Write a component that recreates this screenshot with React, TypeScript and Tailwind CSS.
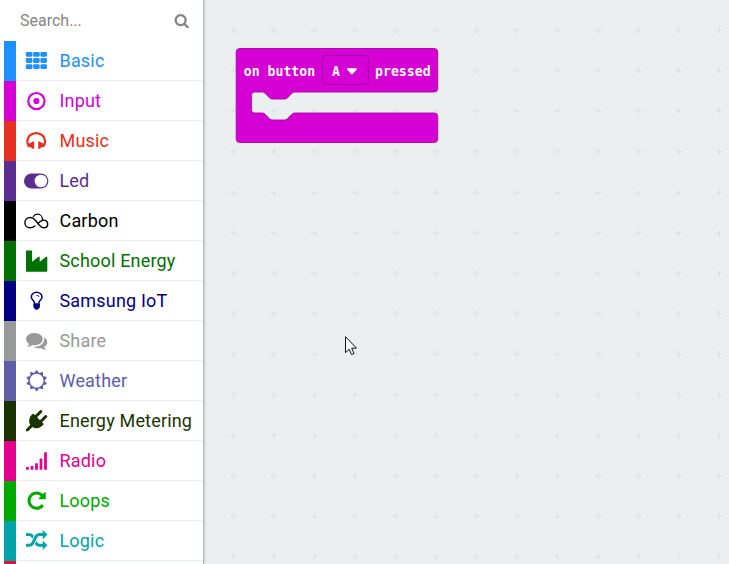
import type { ReactNode } from "react";

function Glyph({ d }: { d: string }) {
  return (
    <svg viewBox="0 0 1792 1792" className="ml-px h-[21.3px] w-[21.3px] shrink-0 overflow-visible fill-current">
      <path d={d} />
    </svg>
  );
}

const SEARCH =
  "M1216 832q0-185-131.5-316.5t-316.5-131.5-316.5 131.5-131.5 316.5 131.5 316.5 316.5 131.5 316.5-131.5 131.5-316.5zm512 832q0 52-38 90t-90 38q-54 0-90-38l-343-342q-179 124-399 124-143 0-273.5-55.5t-225-150-150-225-55.5-273.5 55.5-273.5 150-225 225-150 273.5-55.5 273.5 55.5 225 150 150 225 55.5 273.5q0 220-124 399l343 343q37 37 37 90z";
const REPEAT =
  "M1664 256v448q0 26-19 45t-45 19h-448q-42 0-59-40-17-39 14-69l138-138q-148-137-349-137-104 0-198.5 40.5t-163.5 109.5-109.5 163.5-40.5 198.5 40.5 198.5 109.5 163.5 163.5 109.5 198.5 40.5q119 0 225-52t179-147q7-10 23-12 15 0 25 9l137 138q9 8 9.5 20.5t-7.5 22.5q-109 132-264 204.5t-327 72.5q-156 0-298-61t-245-164-164-245-61-298 61-298 164-245 245-164 298-61q147 0 284.5 55.5t244.5 156.5l130-129q29-31 70-14 39 17 39 59z";
const COMMENTS =
  "M1408 768q0 139-94 257t-256.5 186.5-353.5 68.5q-86 0-176-16-124 88-278 128-36 9-86 16h-3q-11 0-20.5-8t-11.5-21q-1-3-1-6.5t.5-6.5 2-6l2.5-5 3.5-5.5 4-5 4.5-5 4-4.5q5-6 23-25t26-29.5 22.5-29 25-38.5 20.5-44q-124-72-195-177t-71-224q0-139 94-257t256.5-186.5 353.5-68.5 353.5 68.5 256.5 186.5 94 257zm384 256q0 120-71 224.5t-195 176.5q10 24 20.5 44t25 38.5 22.5 29 26 29.5 23 25q1 1 4 4.5t4.5 5 4 5 3.5 5.5l2.5 5 2 6 .5 6.5-1 6.5q-3 14-13 22t-22 7q-50-7-86-16-154-40-278-128-90 16-176 16-271 0-472-132 58 4 88 4 161 0 309-45t264-129q125-92 192-212t67-254q0-77-23-152 129 71 204 178t75 230z";
const RANDOM =
  "M666 481q-60 92-137 273-22-45-37-72.5t-40.5-63.5-51-56.5-63-35-81.5-14.5h-224q-14 0-23-9t-9-23v-192q0-14 9-23t23-9h224q250 0 410 225zm1126 799q0 14-9 23l-320 320q-9 9-23 9-13 0-22.5-9.5t-9.5-22.5v-192q-32 0-85 .5t-81 1-73-1-71-5-64-10.5-63-18.5-58-28.5-59-40-55-53.5-56-69.5q59-93 136-273 22 45 37 72.5t40.5 63.5 51 56.5 63 35 81.5 14.5h256v-192q0-14 9-23t23-9q12 0 24 10l319 319q9 9 9 23zm0-896q0 14-9 23l-320 320q-9 9-23 9-13 0-22.5-9.5t-9.5-22.5v-192h-256q-48 0-87 15t-69 45-51 61.5-45 77.5q-32 62-78 171-29 66-49.5 111t-54 105-64 100-74 83-90 68.5-106.5 42-128 16.5h-224q-14 0-23-9t-9-23v-192q0-14 9-23t23-9h224q48 0 87-15t69-45 51-61.5 45-77.5q32-62 78-171 29-66 49.5-111t54-105 64-100 74-83 90-68.5 106.5-42 128-16.5h256v-192q0-14 9-23t23-9q12 0 24 10l319 319q9 9 9 23z";
const PLUG =
  "M1755 453q37 38 37 90.5t-37 90.5l-401 400 150 150-160 160q-163 163-389.5 186.5t-411.5-100.5l-362 362h-181v-181l362-362q-124-185-100.5-411.5t186.5-389.5l160-160 150 150 400-401q38-37 91-37t90 37 37 90.5-37 90.5l-400 401 234 234 401-400q38-37 91-37t90 37z";
const BULB =
  "M1120 576q0 13-9.5 22.5t-22.5 9.5-22.5-9.5-9.5-22.5q0-46-54-71t-106-25q-13 0-22.5-9.5t-9.5-22.5 9.5-22.5 22.5-9.5q50 0 99.5 16t87 54 37.5 90zm160 0q0-72-34.5-134t-90-101.5-123-62-136.5-22.5-136.5 22.5-123 62-90 101.5-34.5 134q0 101 68 180 10 11 30.5 33t30.5 33q128 153 141 298h228q13-145 141-298 10-11 30.5-33t30.5-33q68-79 68-180zm128 0q0 155-103 268-45 49-74.5 87t-59.5 95.5-34 107.5q47 28 47 82 0 37-25 64 25 27 25 64 0 52-45 81 13 23 13 47 0 46-31.5 71t-77.5 25q-20 44-60 70t-87 26-87-26-60-70q-46 0-77.5-25t-31.5-71q0-24 13-47-45-29-45-81 0-37 25-64-25-27-25-64 0-54 47-82-4-50-34-107.5t-59.5-95.5-74.5-87q-103-113-103-268 0-99 44.5-184.5t117-142 164-89 186.5-32.5 186.5 32.5 164 89 117 142 44.5 184.5z";
const SUN =
  "M1472 896q0-117-45.5-223.5t-123-184-184-123-223.5-45.5-223.5 45.5-184 123-123 184-45.5 223.5 45.5 223.5 123 184 184 123 223.5 45.5 223.5-45.5 184-123 123-184 45.5-223.5zm276 277q-4 15-20 20l-292 96v306q0 16-13 26-15 10-29 4l-292-94-180 248q-10 13-26 13t-26-13l-180-248-292 94q-14 6-29-4-13-10-13-26v-306l-292-96q-16-5-20-20-5-17 4-29l180-248-180-248q-9-13-4-29 4-15 20-20l292-96v-306q0-16 13-26 15-10 29-4l292 94 180-248q9-12 26-12t26 12l180 248 292-94q14-6 29 4 13 10 13 26v306l292 96q16 5 20 20 5 16-4 29l-180 248 180 248q9 12 4 29z";
const INDUSTRY =
  "M448 32q26 0 45 19t19 45v891l536-429q17-14 40-14 26 0 45 19t19 45v379l536-429q17-14 40-14 26 0 45 19t19 45v1152q0 26-19 45t-45 19h-1664q-26 0-45-19t-19-45v-1664q0-26 19-45t45-19h384z";

const box = "h-6 w-6 shrink-0 overflow-visible fill-current";

const GridIcon = () => (
  <svg viewBox="0 0 24 24" className={box}>
    {[2.9, 9.1, 15.2].map((y) =>
      [1.8, 9.1, 16.4].map((x) => <rect key={`${x}-${y}`} x={x} y={y} width="6.6" height="4.9" rx="1.4" />),
    )}
  </svg>
);
const TargetIcon = () => (
  <svg viewBox="0 0 24 24" className={box}>
    <circle cx="12.4" cy="12.1" r="8.1" fill="none" stroke="currentColor" strokeWidth="2.2" />
    <circle cx="12.4" cy="12.1" r="3.1" />
  </svg>
);
const HeadphonesIcon = () => (
  <svg viewBox="0 0 24 24" className={box}>
    <path
      d="M4.700 16.800C3.700 15.300 3.300 13.800 3.300 12.200C3.300 7.400 7.300 4.100 12.200 4.100s8.900 3.300 8.900 8.100c0 1.600-.4 3.100-1.400 4.600"
      fill="none"
      stroke="currentColor"
      strokeWidth="2.200"
    />
    <path d="M8.300 12.400h1.900v7.300H8.300v-.700L3.500 17.400v-2.200L8.300 12.900zM14.200 12.400h1.900v.5l4.800 2.300v2.200L16.100 19v.700H14.200z" />
  </svg>
);
const ToggleIcon = () => (
  <svg viewBox="0 0 24 24" className={box}>
    <rect x="0" y="4.500" width="24.400" height="15" rx="7.500" />
    <circle cx="16.900" cy="12" r="6.300" fill="#fff" />
  </svg>
);
const CloudLoopIcon = () => (
  <svg viewBox="0 0 24 24" className={box}>
    <g fill="none" stroke="currentColor" strokeLinecap="round">
      <path
        d="M10.900 17C9.500 18.100 7.800 18.700 6 18.700C3 18.700 .9 16.600 .9 13.700C.9 10.700 3.200 8.500 6.200 8.500C8.600 8.500 10 9.600 11.300 11.200L15.300 16.100C16.600 17.700 17.900 18.700 19.700 18.700C22.100 18.700 23.700 17 23.700 14.900C23.700 12.800 22.100 11.100 19.900 11.100C18.300 11.100 17.100 11.700 15.900 12.800L13.800 14.700"
        strokeWidth="1.400"
      />
      <path d="M9.300 7.500C10.100 6 11.700 5.200 13.500 5.200C16.400 5.200 18.500 7.500 18.500 10.900" strokeWidth="1.200" />
    </g>
  </svg>
);
const SignalIcon = () => (
  <svg viewBox="0 0 24 24" className={box}>
    <rect x="2" y="18.100" width="2.800" height="2.700" rx=".4" />
    <rect x="6.600" y="17" width="2.800" height="3.800" rx=".4" />
    <rect x="11.100" y="14.200" width="2.800" height="6.600" rx=".4" />
    <rect x="15.600" y="9.600" width="2.800" height="11.200" rx=".4" />
    <rect x="20.100" y="3.200" width="2.800" height="17.600" rx=".4" />
  </svg>
);

const categories: { name: string; bar: string; text: string; icon: ReactNode }[] = [
  { name: "Basic", bar: "bg-[#1e90ff]", text: "text-[#1e90ff]", icon: <GridIcon /> },
  { name: "Input", bar: "bg-[#d400d4]", text: "text-[#d400d4]", icon: <TargetIcon /> },
  { name: "Music", bar: "bg-[#e63022]", text: "text-[#e63022]", icon: <HeadphonesIcon /> },
  { name: "Led", bar: "bg-[#5c2d91]", text: "text-[#5c2d91]", icon: <ToggleIcon /> },
  { name: "Carbon", bar: "bg-black", text: "text-black", icon: <CloudLoopIcon /> },
  { name: "School Energy", bar: "bg-[#007000]", text: "text-[#007000]", icon: <Glyph d={INDUSTRY} /> },
  { name: "Samsung IoT", bar: "bg-[#000080]", text: "text-[#000080]", icon: <Glyph d={BULB} /> },
  { name: "Share", bar: "bg-[#999999]", text: "text-[#999999]", icon: <Glyph d={COMMENTS} /> },
  { name: "Weather", bar: "bg-[#5f5ca8]", text: "text-[#5f5ca8]", icon: <Glyph d={SUN} /> },
  { name: "Energy Metering", bar: "bg-[#1b3300]", text: "text-[#1b3300]", icon: <Glyph d={PLUG} /> },
  { name: "Radio", bar: "bg-[#e3008c]", text: "text-[#e3008c]", icon: <SignalIcon /> },
  { name: "Loops", bar: "bg-[#00aa00]", text: "text-[#00aa00]", icon: <Glyph d={REPEAT} /> },
  { name: "Logic", bar: "bg-[#00a4a6]", text: "text-[#00a4a6]", icon: <Glyph d={RANDOM} /> },
];

function Toolbox() {
  return (
    <aside className="z-10 h-full w-[204px] shrink-0 overflow-hidden border-r border-[#b4b9bb] bg-white shadow-[1px_0_2px_rgba(0,0,0,0.15)]">
      <div className="flex h-[41px] items-center justify-between pr-[14px] pl-5">
        <span className="text-[16px] text-[#858585]">Search...</span>
        <svg viewBox="0 0 1792 1792" className="h-[15.5px] w-[15.5px] fill-[#858585]">
          <path d={SEARCH} />
        </svg>
      </div>
      <ul className="border-l-4 border-[#fcfdfd]">
        {categories.map((c) => (
          <li key={c.name} className="flex h-10">
            <span className={`w-3 ${c.bar}`} />
            <div className={`flex flex-1 items-center border-b border-[#e9eef0] ${c.text}`}>
              <span className="ml-2 flex w-6 items-center justify-center">{c.icon}</span>
              <span className="ml-[11.5px] text-[18px] tracking-[0.18px] whitespace-nowrap">{c.name}</span>
            </div>
          </li>
        ))}
        <li className="h-10 w-3 bg-[#dc143c]" />
      </ul>
    </aside>
  );
}

function Workspace() {
  return (
    <main className="relative flex-1 bg-[#ebeff0]">
      <svg className="absolute inset-0 h-full w-full">
        <defs>
          <pattern id="grid" x="9.200" y="10.100" width="40.500" height="40.500" patternUnits="userSpaceOnUse">
            <path d="M16.900 20.250h6.700M20.250 16.900v6.700" stroke="#dde1e2" strokeWidth="1" />
          </pattern>
        </defs>
        <rect width="100%" height="100%" fill="url(#grid)" />
        <path
          d="M32.500 52a3.500 3.500 0 0 1 3.500-3.500H230.500a3.500 3.500 0 0 1 3.500 3.500V88.500a3.500 3.500 0 0 1-3.500 3.500H91.500Q89.500 92 88 93.400L83.600 98Q82.600 99 81 99H68.500Q67 99 66 98L61.600 93.400Q60.200 92 58.500 92H51a3.300 3.300 0 0 0-3.300 3.300V109.700a3.300 3.300 0 0 0 3.300 3.300H58.500Q60.200 113 61.600 114.400L66 119Q67 120 68.500 120H81Q82.600 120 83.600 119L88 114.400Q89.500 113 91.500 113H230.500a3.500 3.500 0 0 1 3.500 3.500V139a3.500 3.500 0 0 1-3.500 3.500H36a3.500 3.500 0 0 1-3.500-3.500z"
          fill="#d400d4"
          stroke="#aa00aa"
          strokeWidth="0.900"
          transform="translate(-.3 0)"
        />
        <rect x="118.500" y="55.500" width="46" height="29" rx="3.200" fill="none" stroke="#aa00aa" />
        <g className="fill-white font-['DejaVu_Sans_Mono',monospace] text-[13.200px] font-bold">
          <text x="39.700" y="76">on button</text>
          <text x="128" y="76">A</text>
          <text x="171" y="76">pressed</text>
        </g>
        <path d="M144 68.200H151.900Q153.400 68.200 152.600 69.600L148.900 73.800Q147.900 74.800 146.900 73.800L143.200 69.600Q142.400 68.200 144 68.200z" fill="#fff" />
      </svg>
      <svg viewBox="0 0 12 20" className="absolute top-[336px] left-[141px] h-5 w-3">
        <path d="M.5.700V16.700L4.200 13.200L6.500 18.500L9 17.500L6.700 12.200H11.500z" fill="#fff" stroke="#111" strokeWidth="1" />
      </svg>
    </main>
  );
}

export default function App() {
  return (
    <div className="flex h-[564px] w-[729px] overflow-hidden font-[Roboto,sans-serif]">
      <Toolbox />
      <Workspace />
    </div>
  );
}
